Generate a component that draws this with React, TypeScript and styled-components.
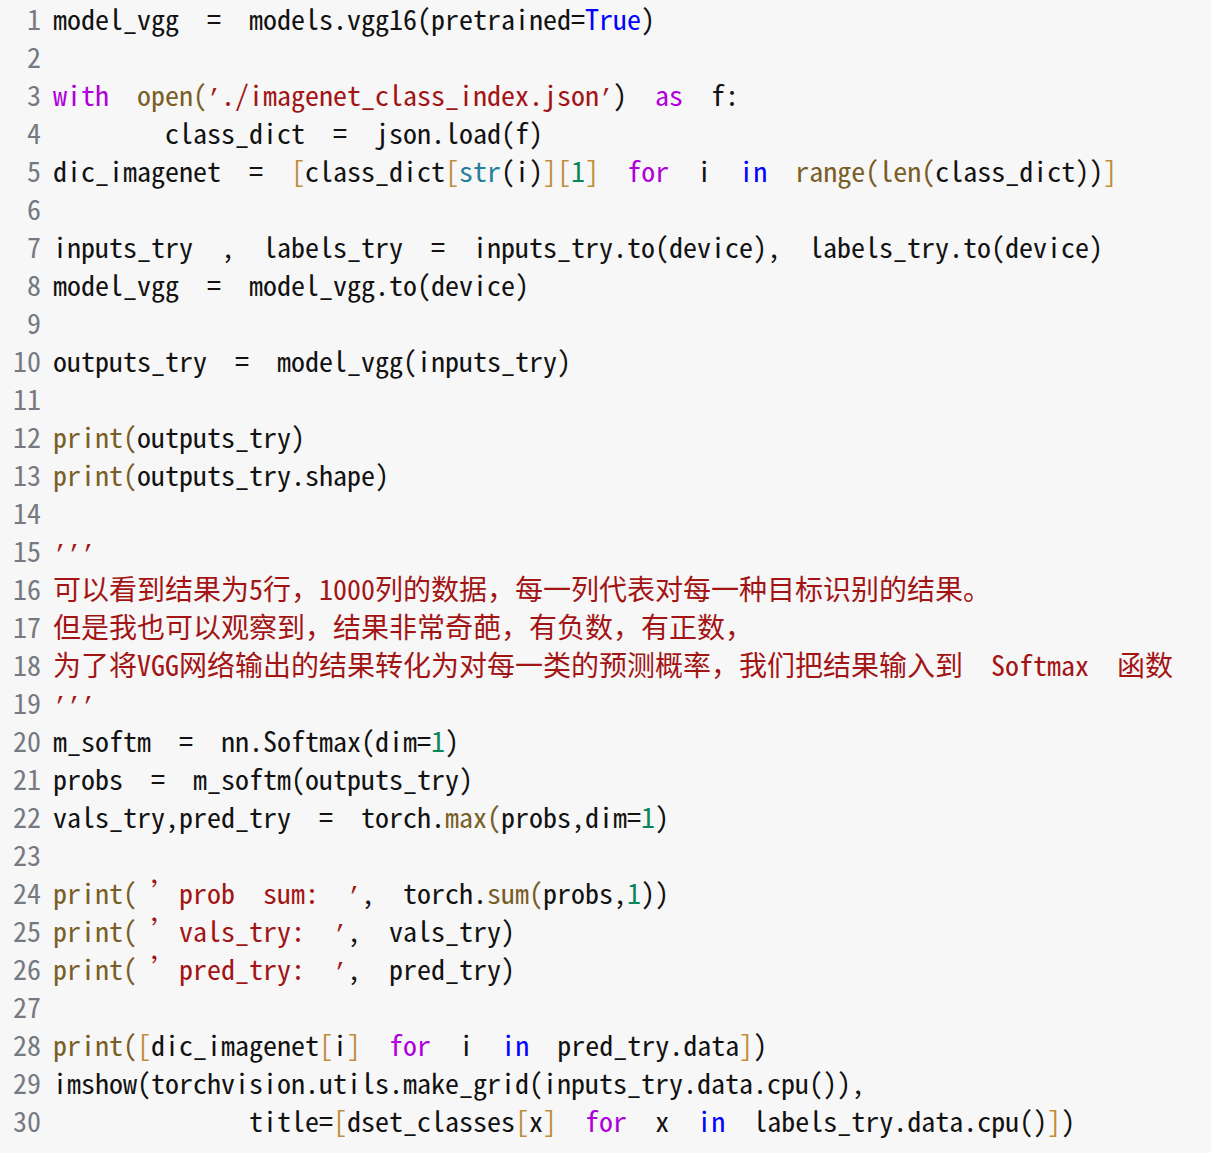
import React from "react";
import styled, { createGlobalStyle } from "styled-components";

const GlobalStyle = createGlobalStyle`
  html, body {
    margin: 0;
    padding: 0;
    background: #f7f7f7;
  }
  body {
    font-family: "Noto Sans Mono CJK SC", "Liberation Mono", monospace;
  }
`;

type Kind = "d" | "k" | "b" | "f" | "s" | "t" | "n" | "p";

const COLORS: Record<Kind, string> = {
  d: "#121212",
  k: "#af00db",
  b: "#0000ff",
  f: "#795e26",
  s: "#a31515",
  t: "#267f99",
  n: "#098658",
  p: "#c18d3b",
};

const CodeBlock = styled.div`
  display: flex;
  flex-direction: column;
  padding: 3px 0 10px 0;
  background: #f7f7f7;
  min-height: 1153px;
  box-sizing: border-box;
  font-family: "Noto Sans Mono CJK SC", "Liberation Mono", monospace;
  font-size: 28px;
`;

const Row = styled.div`
  display: flex;
  align-items: baseline;
  height: 38px;
  line-height: 30px;
`;

const LineNo = styled.span`
  flex: 0 0 41px;
  text-align: right;
  color: #767a80;
`;

const Code = styled.span`
  margin-left: 12px;
  white-space: pre;
`;

const Token = styled.span<{ $kind: Kind }>`
  color: ${(p) => COLORS[p.$kind]};
`;

/* half-width curly quote, as the original font draws it */
const Quote = styled.span`
  display: inline-block;
  width: 14px;
  font-family: "Liberation Mono", monospace;
  font-size: 23.333px;
  line-height: 0;
`;

type Seg = [Kind, string];

const LINES: Seg[][] = [
  [["d", "model_vgg  =  models.vgg16(pretrained="], ["b", "True"], ["d", ")"]],
  [],
  [["k", "with"], ["d", "  "], ["f", "open("], ["s", "`./imagenet_class_index.json`"], ["d", ")  "], ["k", "as"], ["d", "  f:"]],
  [["d", "        class_dict  =  json.load(f)"]],
  [
    ["d", "dic_imagenet  =  "], ["p", "["], ["d", "class_dict"], ["p", "["], ["t", "str"], ["d", "(i)"],
    ["p", "]["], ["n", "1"], ["p", "]"], ["d", "  "], ["k", "for"], ["d", "  i  "], ["b", "in"], ["d", "  "],
    ["f", "range(len("], ["d", "class_dict))"], ["p", "]"],
  ],
  [],
  [["d", "inputs_try  ,  labels_try  =  inputs_try.to(device),  labels_try.to(device)"]],
  [["d", "model_vgg  =  model_vgg.to(device)"]],
  [],
  [["d", "outputs_try  =  model_vgg(inputs_try)"]],
  [],
  [["f", "print("], ["d", "outputs_try)"]],
  [["f", "print("], ["d", "outputs_try.shape)"]],
  [],
  [["s", "```"]],
  [["s", "可以看到结果为5行，1000列的数据，每一列代表对每一种目标识别的结果。"]],
  [["s", "但是我也可以观察到，结果非常奇葩，有负数，有正数，"]],
  [["s", "为了将VGG网络输出的结果转化为对每一类的预测概率，我们把结果输入到  Softmax  函数"]],
  [["s", "```"]],
  [["d", "m_softm  =  nn.Softmax(dim="], ["n", "1"], ["d", ")"]],
  [["d", "probs  =  m_softm(outputs_try)"]],
  [["d", "vals_try,pred_try  =  torch."], ["f", "max("], ["d", "probs,dim="], ["n", "1"], ["d", ")"]],
  [],
  [["f", "print("], ["d", " "], ["s", "’prob  sum:  `"], ["d", ",  torch."], ["f", "sum("], ["d", "probs,"], ["n", "1"], ["d", "))"]],
  [["f", "print("], ["d", " "], ["s", "’vals_try:  `"], ["d", ",  vals_try)"]],
  [["f", "print("], ["d", " "], ["s", "’pred_try:  `"], ["d", ",  pred_try)"]],
  [],
  [
    ["f", "print("], ["p", "["], ["d", "dic_imagenet"], ["p", "["], ["d", "i"], ["p", "]"], ["d", "  "], ["k", "for"],
    ["d", "  i  "], ["b", "in"], ["d", "  pred_try.data"], ["p", "]"], ["d", ")"],
  ],
  [["d", "imshow(torchvision.utils.make_grid(inputs_try.data.cpu()),"]],
  [
    ["d", "              title="], ["p", "["], ["d", "dset_classes"], ["p", "["], ["d", "x"], ["p", "]"], ["d", "  "],
    ["k", "for"], ["d", "  x  "], ["b", "in"], ["d", "  labels_try.data.cpu()"], ["p", "]"], ["d", ")"],
  ],
];

/* a backtick in the data marks a half-width curly quote (’) */
function renderText(text: string) {
  const parts = text.split("`");
  const out: React.ReactNode[] = [];
  parts.forEach((part, i) => {
    if (i > 0) out.push(<Quote key={`q${i}`}>’</Quote>);
    if (part) out.push(<React.Fragment key={`t${i}`}>{part}</React.Fragment>);
  });
  return out;
}

export default function App() {
  return (
    <>
      <GlobalStyle />
      <CodeBlock>
        {LINES.map((segs, idx) => (
          <Row key={idx}>
            <LineNo>{idx + 1}</LineNo>
            <Code>
              {segs.map(([kind, text], j) => (
                <Token key={j} $kind={kind}>
                  {renderText(text)}
                </Token>
              ))}
            </Code>
          </Row>
        ))}
      </CodeBlock>
    </>
  );
}
